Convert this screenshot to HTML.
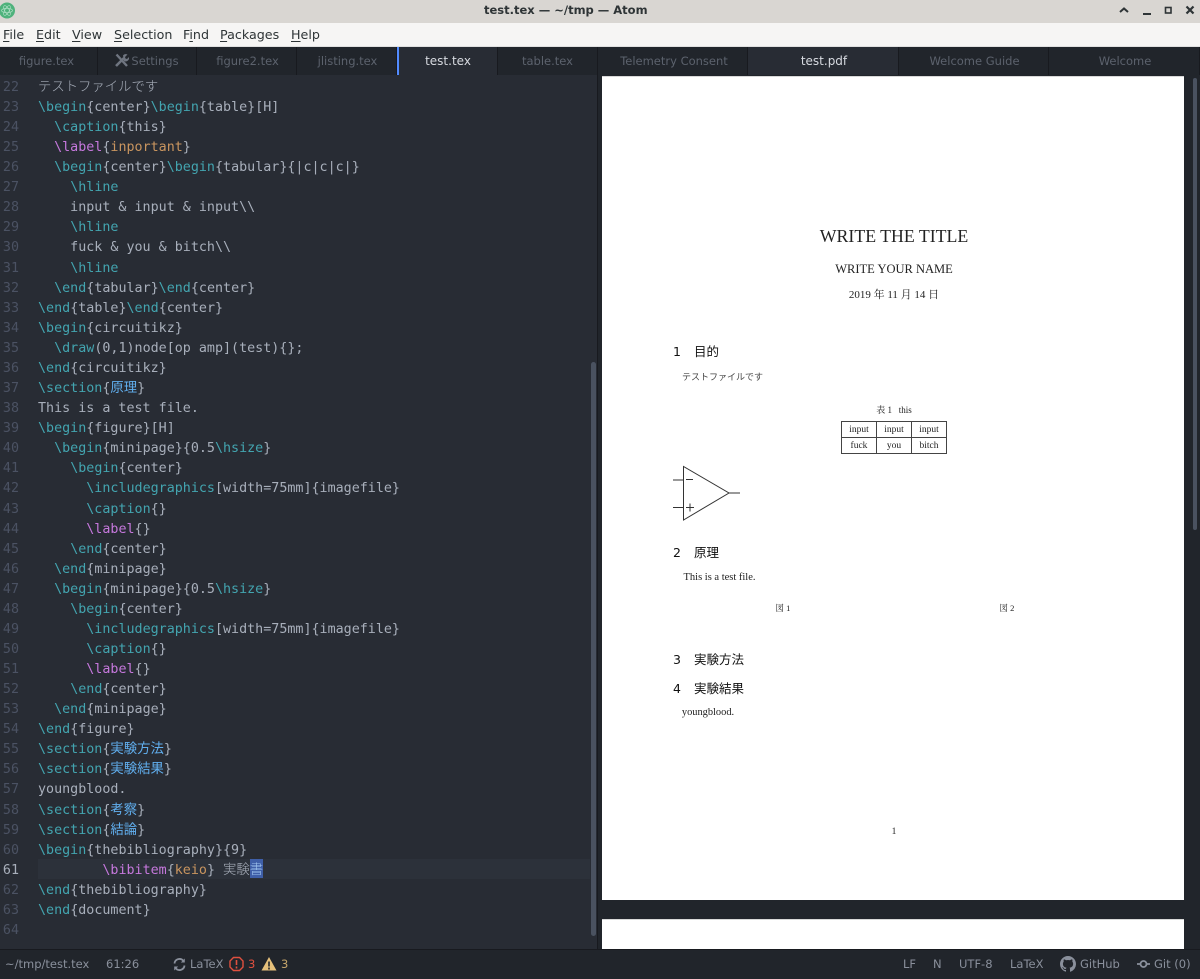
<!DOCTYPE html>
<html><head><meta charset="utf-8"><style>
html,body{margin:0;padding:0;width:1200px;height:979px;overflow:hidden;background:#21252b}
*{box-sizing:border-box}
#root{position:absolute;left:0;top:0;width:1200px;height:979px;filter:blur(.35px)}
.a{position:absolute;white-space:nowrap}
#titlebar{left:0;top:0;width:1200px;height:23px;background:#d9d6d2}
#ttl{left:484px;top:0;font:bold 11.5px/21px "DejaVu Sans",sans-serif;color:#2e3436}
#menubar{left:0;top:23px;width:1200px;height:24px;background:#f6f5f4;border-bottom:1px solid #e0e0e0}
.m{position:absolute;top:27px;font:12.7px/16px "DejaVu Sans",sans-serif;color:#2e3436}
.m u{text-underline-offset:2px}
#tabs{left:0;top:47px;width:1200px;height:28px;background:#21252b}
.tab{position:absolute;top:47px;height:28px;text-align:center;font:11.5px/28px "DejaVu Sans",sans-serif;color:#5c626d;border-right:1px solid #181a1f}
.tab span{position:relative}
.tab.on{background:#282c34;color:#d7dae0;font-size:12px}
#ed{left:0;top:75px;width:597px;height:874px;background:#282c34}
#cur{left:38px;top:859px;width:552px;height:20px;background:#2c313a}
.gl,.ln{position:absolute;margin-top:2px;font:13.36px/20px "DejaVu Sans Mono","Noto Sans CJK JP",monospace;white-space:pre;height:20px}
.gl{left:0;width:19px;text-align:right;color:#4b5263}
.ln{left:38px;color:#a8afbb}
.gl.c{color:#a8afbb}
.b{color:#43a5b0}.p{color:#c678dd}.o{color:#c9955f}.s{color:#61afef}
.j{font-family:"Noto Sans CJK JP",sans-serif;line-height:0}
.l{font-weight:300}
#sb{left:591px;top:362px;width:5px;height:574px;background:#4a5260;border-radius:3px}
#sb2{left:1193px;top:78px;width:4px;height:452px;background:#4a5260;border-radius:2px}
#pv{left:597px;top:75px;width:603px;height:874px;background:#21252b;overflow:hidden;border-left:1px solid #181a1f}
.pg{position:absolute;left:4px;width:582px;background:#fff}
.t{position:absolute;white-space:nowrap;font-family:"Liberation Serif","Noto Serif CJK SC",serif;color:#222;transform:translateX(-50%)}
.h{position:absolute;white-space:nowrap;font:12.5px/16px "DejaVu Sans","Noto Sans CJK JP",sans-serif;color:#111}
#status{left:0;top:949px;width:1200px;height:30px;background:#21252b;border-top:1px solid #181a1f;font:11.5px/28px "DejaVu Sans",sans-serif;color:#8a909c}
.st{position:absolute;top:0;white-space:nowrap}
</style></head><body><div id="root">
<div id="titlebar" class="a"></div>
<div id="ttl" class="a">test.tex — ~/tmp — Atom</div>
<svg class="a" style="left:0;top:1px" width="16" height="20" viewBox="0 0 16 20"><circle cx="7" cy="9.500" r="8" fill="#4fb27c"/><g fill="none" stroke="#cfeedd" stroke-width=".6" opacity=".8"><ellipse cx="7" cy="9.500" rx="5.500" ry="2.200" transform="rotate(60 7 9.500)"/><ellipse cx="7" cy="9.500" rx="5.500" ry="2.200" transform="rotate(-60 7 9.500)"/><ellipse cx="7" cy="9.500" rx="5.500" ry="2.200"/></g></svg>
<svg class="a" style="left:1110px;top:2px" width="90" height="20" viewBox="0 0 90 20"><path d="M10 10L14 6.500l4 3.500" fill="none" stroke="#2e3436" stroke-width="2"/><path d="M33 12h8" stroke="#2e3436" stroke-width="2"/><rect x="55.500" y="5.500" width="5.500" height="5.500" fill="none" stroke="#2e3436" stroke-width="1.600"/><path d="M76.500 4.500l7 7M83.500 4.500l-7 7" stroke="#2e3436" stroke-width="2.200"/></svg>
<div id="menubar" class="a"></div>
<div class="m" style="left:3px"><u>F</u>ile</div>
<div class="m" style="left:36px"><u>E</u>dit</div>
<div class="m" style="left:72px"><u>V</u>iew</div>
<div class="m" style="left:114px"><u>S</u>election</div>
<div class="m" style="left:183px">F<u>i</u>nd</div>
<div class="m" style="left:220px"><u>P</u>ackages</div>
<div class="m" style="left:291px"><u>H</u>elp</div>
<div id="tabs" class="a"></div>
<div class="tab" style="left:0;width:98px"><span style="left:-2px">figure.tex</span></div>
<div class="tab" style="left:98px;width:99px"><span style="margin-left:16px">Settings</span></div>
<svg class="a" style="left:114px;top:53px" width="15" height="15" viewBox="0 0 15 15"><path d="M2 13L10 5" stroke="#6f7580" stroke-width="2.600"/><path d="M9 2.500A3.500 3.500 0 0 1 13.500 1.500L11 4l.5 1.500L13 6l2-2A3.500 3.500 0 0 1 10 8Z" fill="#6f7580"/><path d="M2.500 1.500L13 13" stroke="#6f7580" stroke-width="2.400"/></svg>
<div class="tab" style="left:197px;width:100px"><span style="left:1px">figure2.tex</span></div>
<div class="tab" style="left:297px;width:100px"><span style="left:1px">jlisting.tex</span></div>
<div class="tab on" style="left:397px;width:101px;border-left:2px solid #528bff">test.tex</div>
<div class="tab" style="left:498px;width:100px">table.tex</div>
<div class="tab" style="left:598px;width:150px"><span style="left:1.500px">Telemetry Consent</span></div>
<div class="tab on" style="left:748px;width:151px"><span style="left:1px">test.pdf</span></div>
<div class="tab" style="left:899px;width:150px"><span style="left:1px">Welcome Guide</span></div>
<div class="tab" style="left:1049px;width:151px"><span style="left:1px">Welcome</span></div>
<div id="ed" class="a"></div>
<div id="cur" class="a"></div>
<div class="gl" style="top:76px">22</div><div class="ln" style="top:76px"><span class="j l">テストファイルです</span></div>
<div class="gl" style="top:96px">23</div><div class="ln" style="top:96px"><span class="b">\begin</span>{center}<span class="b">\begin</span>{table}[H]</div>
<div class="gl" style="top:116px">24</div><div class="ln" style="top:116px">  <span class="b">\caption</span>{this}</div>
<div class="gl" style="top:136px">25</div><div class="ln" style="top:136px">  <span class="p">\label</span>{<span class="o">inportant</span>}</div>
<div class="gl" style="top:156px">26</div><div class="ln" style="top:156px">  <span class="b">\begin</span>{center}<span class="b">\begin</span>{tabular}{|c|c|c|}</div>
<div class="gl" style="top:176px">27</div><div class="ln" style="top:176px">    <span class="b">\hline</span></div>
<div class="gl" style="top:196px">28</div><div class="ln" style="top:196px">    input &amp; input &amp; input\\</div>
<div class="gl" style="top:216px">29</div><div class="ln" style="top:216px">    <span class="b">\hline</span></div>
<div class="gl" style="top:236px">30</div><div class="ln" style="top:236px">    fuck &amp; you &amp; bitch\\</div>
<div class="gl" style="top:257px">31</div><div class="ln" style="top:257px">    <span class="b">\hline</span></div>
<div class="gl" style="top:277px">32</div><div class="ln" style="top:277px">  <span class="b">\end</span>{tabular}<span class="b">\end</span>{center}</div>
<div class="gl" style="top:297px">33</div><div class="ln" style="top:297px"><span class="b">\end</span>{table}<span class="b">\end</span>{center}</div>
<div class="gl" style="top:317px">34</div><div class="ln" style="top:317px"><span class="b">\begin</span>{circuitikz}</div>
<div class="gl" style="top:337px">35</div><div class="ln" style="top:337px">  <span class="b">\draw</span>(0,1)node[op amp](test){};</div>
<div class="gl" style="top:357px">36</div><div class="ln" style="top:357px"><span class="b">\end</span>{circuitikz}</div>
<div class="gl" style="top:377px">37</div><div class="ln" style="top:377px"><span class="b">\section</span>{<span class="s j">原理</span>}</div>
<div class="gl" style="top:397px">38</div><div class="ln" style="top:397px">This is a test file.</div>
<div class="gl" style="top:417px">39</div><div class="ln" style="top:417px"><span class="b">\begin</span>{figure}[H]</div>
<div class="gl" style="top:437px">40</div><div class="ln" style="top:437px">  <span class="b">\begin</span>{minipage}{0.5<span class="b">\hsize</span>}</div>
<div class="gl" style="top:457px">41</div><div class="ln" style="top:457px">    <span class="b">\begin</span>{center}</div>
<div class="gl" style="top:477px">42</div><div class="ln" style="top:477px">      <span class="b">\includegraphics</span>[width=75mm]{imagefile}</div>
<div class="gl" style="top:498px">43</div><div class="ln" style="top:498px">      <span class="b">\caption</span>{}</div>
<div class="gl" style="top:518px">44</div><div class="ln" style="top:518px">      <span class="p">\label</span>{}</div>
<div class="gl" style="top:538px">45</div><div class="ln" style="top:538px">    <span class="b">\end</span>{center}</div>
<div class="gl" style="top:558px">46</div><div class="ln" style="top:558px">  <span class="b">\end</span>{minipage}</div>
<div class="gl" style="top:578px">47</div><div class="ln" style="top:578px">  <span class="b">\begin</span>{minipage}{0.5<span class="b">\hsize</span>}</div>
<div class="gl" style="top:598px">48</div><div class="ln" style="top:598px">    <span class="b">\begin</span>{center}</div>
<div class="gl" style="top:618px">49</div><div class="ln" style="top:618px">      <span class="b">\includegraphics</span>[width=75mm]{imagefile}</div>
<div class="gl" style="top:638px">50</div><div class="ln" style="top:638px">      <span class="b">\caption</span>{}</div>
<div class="gl" style="top:658px">51</div><div class="ln" style="top:658px">      <span class="p">\label</span>{}</div>
<div class="gl" style="top:678px">52</div><div class="ln" style="top:678px">    <span class="b">\end</span>{center}</div>
<div class="gl" style="top:698px">53</div><div class="ln" style="top:698px">  <span class="b">\end</span>{minipage}</div>
<div class="gl" style="top:718px">54</div><div class="ln" style="top:718px"><span class="b">\end</span>{figure}</div>
<div class="gl" style="top:738px">55</div><div class="ln" style="top:738px"><span class="b">\section</span>{<span class="s j">実験方法</span>}</div>
<div class="gl" style="top:758px">56</div><div class="ln" style="top:758px"><span class="b">\section</span>{<span class="s j">実験結果</span>}</div>
<div class="gl" style="top:778px">57</div><div class="ln" style="top:778px">youngblood.</div>
<div class="gl" style="top:799px">58</div><div class="ln" style="top:799px"><span class="b">\section</span>{<span class="s j">考察</span>}</div>
<div class="gl" style="top:819px">59</div><div class="ln" style="top:819px"><span class="b">\section</span>{<span class="s j">結論</span>}</div>
<div class="gl" style="top:839px">60</div><div class="ln" style="top:839px"><span class="b">\begin</span>{thebibliography}{9}</div>
<div class="gl c" style="top:859px">61</div><div class="ln" style="top:859px">        <span class="p">\bibitem</span>{<span class="o">keio</span>} <span class="j l">実験<span style="background:#3f5fa8;color:#9fc4f0">書</span></span></div>
<div class="gl" style="top:879px">62</div><div class="ln" style="top:879px"><span class="b">\end</span>{thebibliography}</div>
<div class="gl" style="top:899px">63</div><div class="ln" style="top:899px"><span class="b">\end</span>{document}</div>
<div class="gl" style="top:919px">64</div>
<div id="sb" class="a"></div>
<div id="pv" class="a">
<div class="pg" style="top:1px;height:824px;border-top:1px solid #d8d8d8">
<div class="t" style="left:292px;top:148px;font-size:17.800px;line-height:22px">WRITE THE TITLE</div>
<div class="t" style="left:292px;top:184px;font-size:12.500px;line-height:16px">WRITE YOUR NAME</div>
<div class="t" style="left:292px;top:210px;font-size:11px;line-height:16px">2019 年 11 月 14 日</div>
<div class="h" style="left:71px;top:267px">1<span style="margin-left:13px">目的</span></div>
<div class="t" style="left:120.500px;top:293px;font-size:9px;line-height:14px;font-family:'Noto Sans CJK JP',sans-serif;color:#444">テストファイルです</div>
<div class="t" style="left:292px;top:326px;font-size:9px;line-height:14px">表 1&nbsp;&nbsp;&nbsp;this</div>
<svg style="position:absolute;left:239px;top:344px" width="107" height="34"><path d="M.5.5H105.500V32.500H.5ZM.5 16.500H105.500M35.500.5V32.500M70.500.5V32.500" fill="none" stroke="#444"/></svg>
<div class="t" style="left:257px;top:346px;font-size:9.500px;line-height:15px">input</div>
<div class="t" style="left:292px;top:346px;font-size:9.500px;line-height:15px">input</div>
<div class="t" style="left:327px;top:346px;font-size:9.500px;line-height:15px">input</div>
<div class="t" style="left:257px;top:362px;font-size:9.500px;line-height:15px">fuck</div>
<div class="t" style="left:292px;top:362px;font-size:9.500px;line-height:15px">you</div>
<div class="t" style="left:327px;top:362px;font-size:9.500px;line-height:15px">bitch</div>
<svg style="position:absolute;left:68px;top:388px" width="72" height="60"><path d="M13.500 1.500V55L59 28ZM59 28H70M3 15H13.500M3 42.500H13.500M16 14.500H23M16 42.500H24M20 38.500V46.500" fill="none" stroke="#333"/></svg>
<div class="h" style="left:71px;top:468px">2<span style="margin-left:13px">原理</span></div>
<div class="t" style="left:117.500px;top:494px;font-size:10.500px;line-height:14px">This is a test file.</div>
<div class="t" style="left:181px;top:525px;font-size:8.500px;line-height:12px">図 1</div>
<div class="t" style="left:405px;top:525px;font-size:8.500px;line-height:12px">図 2</div>
<div class="h" style="left:71px;top:575px">3<span style="margin-left:13px">実験方法</span></div>
<div class="h" style="left:71px;top:604px">4<span style="margin-left:13px">実験結果</span></div>
<div class="t" style="left:106px;top:629px;font-size:10.400px;line-height:14px">youngblood.</div>
<div class="t" style="left:292px;top:748px;font-size:9.500px;line-height:14px">1</div>
</div>
<div class="pg" style="top:844px;height:40px;border-top:1px solid #d8d8d8"></div>
</div>
<div id="sb2" class="a"></div>
<div id="status" class="a">
<span class="st" style="left:5px">~/tmp/test.tex</span>
<span class="st" style="left:106px">61:26</span>
<svg class="st" style="left:172px;top:7px" width="15" height="15" viewBox="0 0 15 15"><path d="M2.500 6.500A5 5 0 0 1 11.500 4M12.500 8.500A5 5 0 0 1 3.500 11" fill="none" stroke="#8a909c" stroke-width="1.800"/><path d="M12.800 1.500V5.500H8.800ZM2.200 13.500V9.500H6.200Z" fill="#8a909c"/></svg>
<span class="st" style="left:190px">LaTeX</span>
<svg class="st" style="left:229px;top:6px" width="15" height="16" viewBox="0 0 15 16"><path d="M4.500 1.500h6l3.500 3.500v6l-3.500 3.500h-6L1 11V5Z" fill="none" stroke="#e0503f" stroke-width="1.400"/><path d="M7.500 4v5M7.500 10.500v2" stroke="#e0503f" stroke-width="1.600"/></svg>
<span class="st" style="left:248px;color:#e0503f">3</span>
<svg class="st" style="left:261px;top:6px" width="16" height="16" viewBox="0 0 16 16"><path d="M8 1L15.500 14.500H.5Z" fill="#e5c07b"/><path d="M8 5.500v5M8 11.500v2" stroke="#21252b" stroke-width="1.600"/></svg>
<span class="st" style="left:281px;color:#c5a56b">3</span>
<span class="st" style="left:903px">LF</span>
<span class="st" style="left:933px">N</span>
<span class="st" style="left:959px">UTF-8</span>
<span class="st" style="left:1010px">LaTeX</span>
<svg class="st" style="left:1060px;top:6px" width="16" height="16" viewBox="0 0 16 16"><path fill="#8a909c" d="M8 0C3.580 0 0 3.580 0 8c0 3.540 2.290 6.530 5.470 7.590.4.070.55-.17.55-.38v-1.340c-2.230.49-2.690-.96-2.690-.96-.36-.92-.89-1.170-.89-1.170-.73-.5.050-.49.050-.49.800.06 1.230.83 1.230.83.710 1.220 1.870.87 2.330.66.070-.52.280-.87.510-1.070-1.780-.2-3.640-.89-3.640-3.950 0-.87.310-1.590.82-2.150-.08-.2-.36-1.020.08-2.120 0 0 .67-.21 2.200.82a7.600 7.600 0 0 1 4 0c1.530-1.040 2.200-.82 2.200-.82.440 1.100.16 1.920.08 2.120.51.560.82 1.270.82 2.150 0 3.070-1.870 3.750-3.650 3.950.29.250.54.730.54 1.480v2.190c0 .21.150.46.550.38A8 8 0 0 0 16 8c0-4.420-3.580-8-8-8z"/></svg>
<span class="st" style="left:1080px">GitHub</span>
<svg class="st" style="left:1136px;top:7px" width="15" height="14" viewBox="0 0 15 14"><circle cx="7.500" cy="7" r="3" fill="none" stroke="#8a909c" stroke-width="1.800"/><path d="M1 7h3.500M10.500 7H14" stroke="#8a909c" stroke-width="1.800"/></svg>
<span class="st" style="left:1154px">Git (0)</span>
</div>
</div></body></html>
